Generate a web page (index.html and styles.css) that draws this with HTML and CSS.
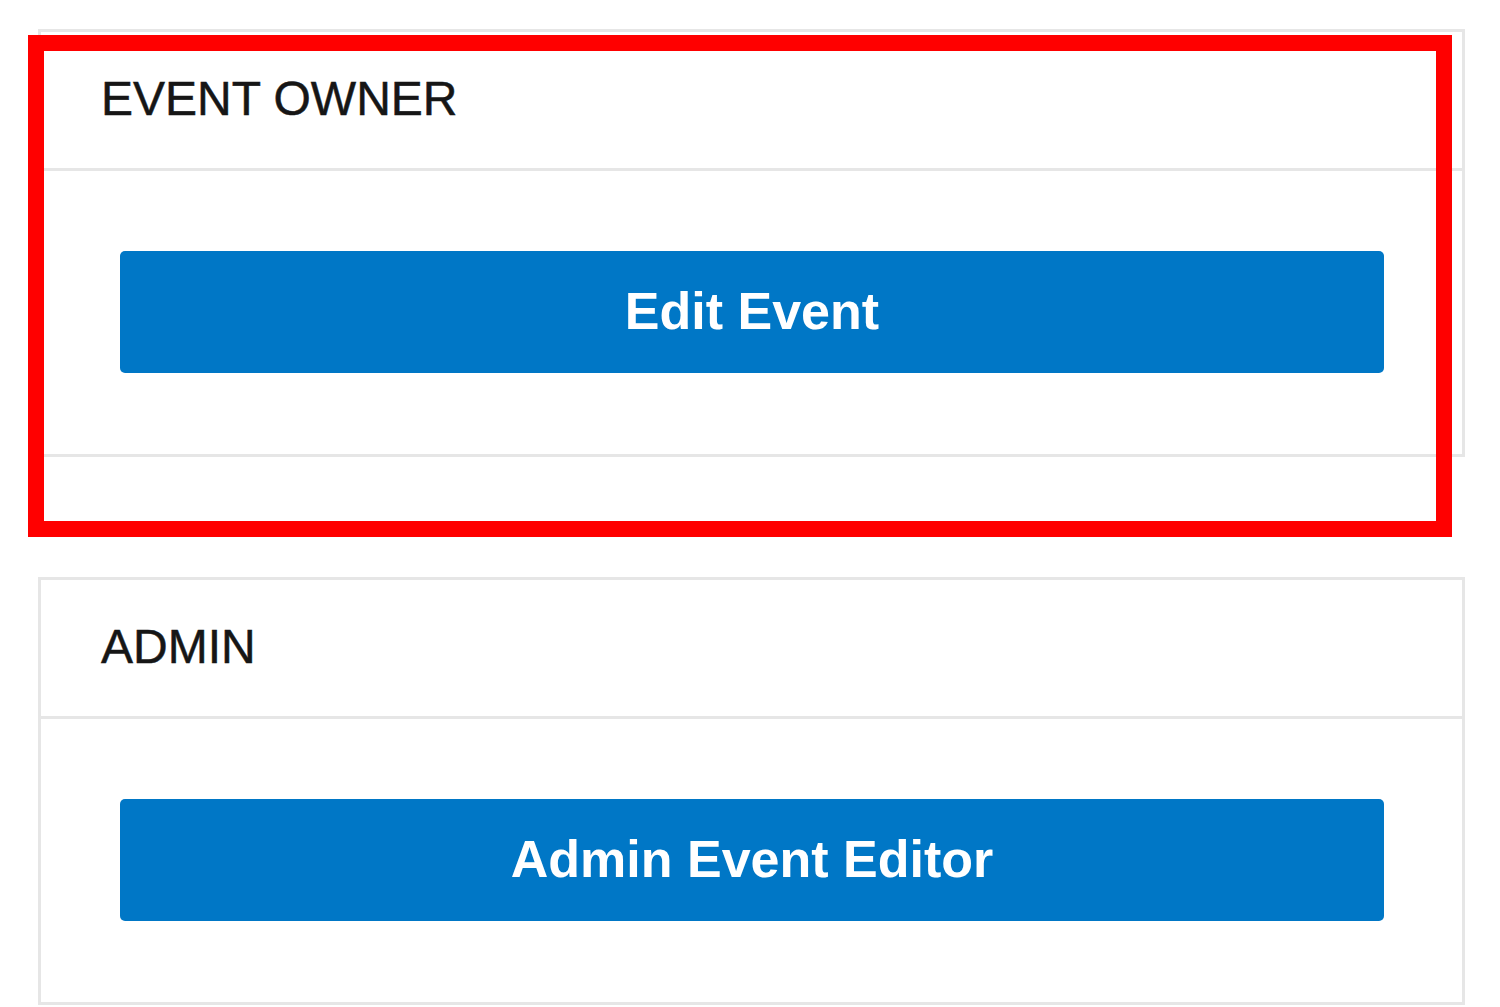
FILE: index.html
```html
<!DOCTYPE html>
<html>
<head>
<meta charset="utf-8">
<link rel="stylesheet" href="styles.css">
</head>
<body>
<div class="page">
  <section class="panel">
    <div class="panel-head">EVENT OWNER</div>
    <div class="panel-body"><button class="btn">Edit Event</button></div>
  </section>
  <section class="panel">
    <div class="panel-head">ADMIN</div>
    <div class="panel-body"><button class="btn">Admin Event Editor</button></div>
  </section>
  <div class="highlight"></div>
</div>
</body>
</html>
```
FILE: styles.css
```css
html, body {
  margin: 0;
  padding: 0;
  background: #ffffff;
}
body {
  font-family: "Liberation Sans", Arial, sans-serif;
  width: 1500px;
  height: 1007px;
  overflow: hidden;
}
.page {
  position: relative;
  padding: 29px 0 0 38px;
  width: 1427px;
  display: flex;
  flex-direction: column;
  gap: 120px;
}
.panel {
  border: 3px solid #e6e6e6;
  background: #fff;
}
.panel-head {
  display: flex;
  align-items: center;
  padding: 0 0 4px 60px;
  font-size: 48px;
  color: #161616;
  -webkit-text-stroke: 0.5px #161616;
  border-bottom: 3px solid #e6e6e6;
  box-sizing: border-box;
  height: 139px;
}
.panel-body {
  padding: 80px 78px 81px 79px;
}
.btn {
  display: block;
  width: 100%;
  height: 122px;
  border: none;
  border-radius: 5px;
  background: #0077c6;
  color: #fff;
  font-family: "Liberation Sans", Arial, sans-serif;
  font-weight: bold;
  font-size: 52px;
  padding: 0 0 3px 0;
  cursor: pointer;
}
.highlight {
  position: absolute;
  left: 28px;
  top: 35px;
  width: 1424px;
  height: 502px;
  box-sizing: border-box;
  border: 16px solid #ff0000;
  pointer-events: none;
}
```
